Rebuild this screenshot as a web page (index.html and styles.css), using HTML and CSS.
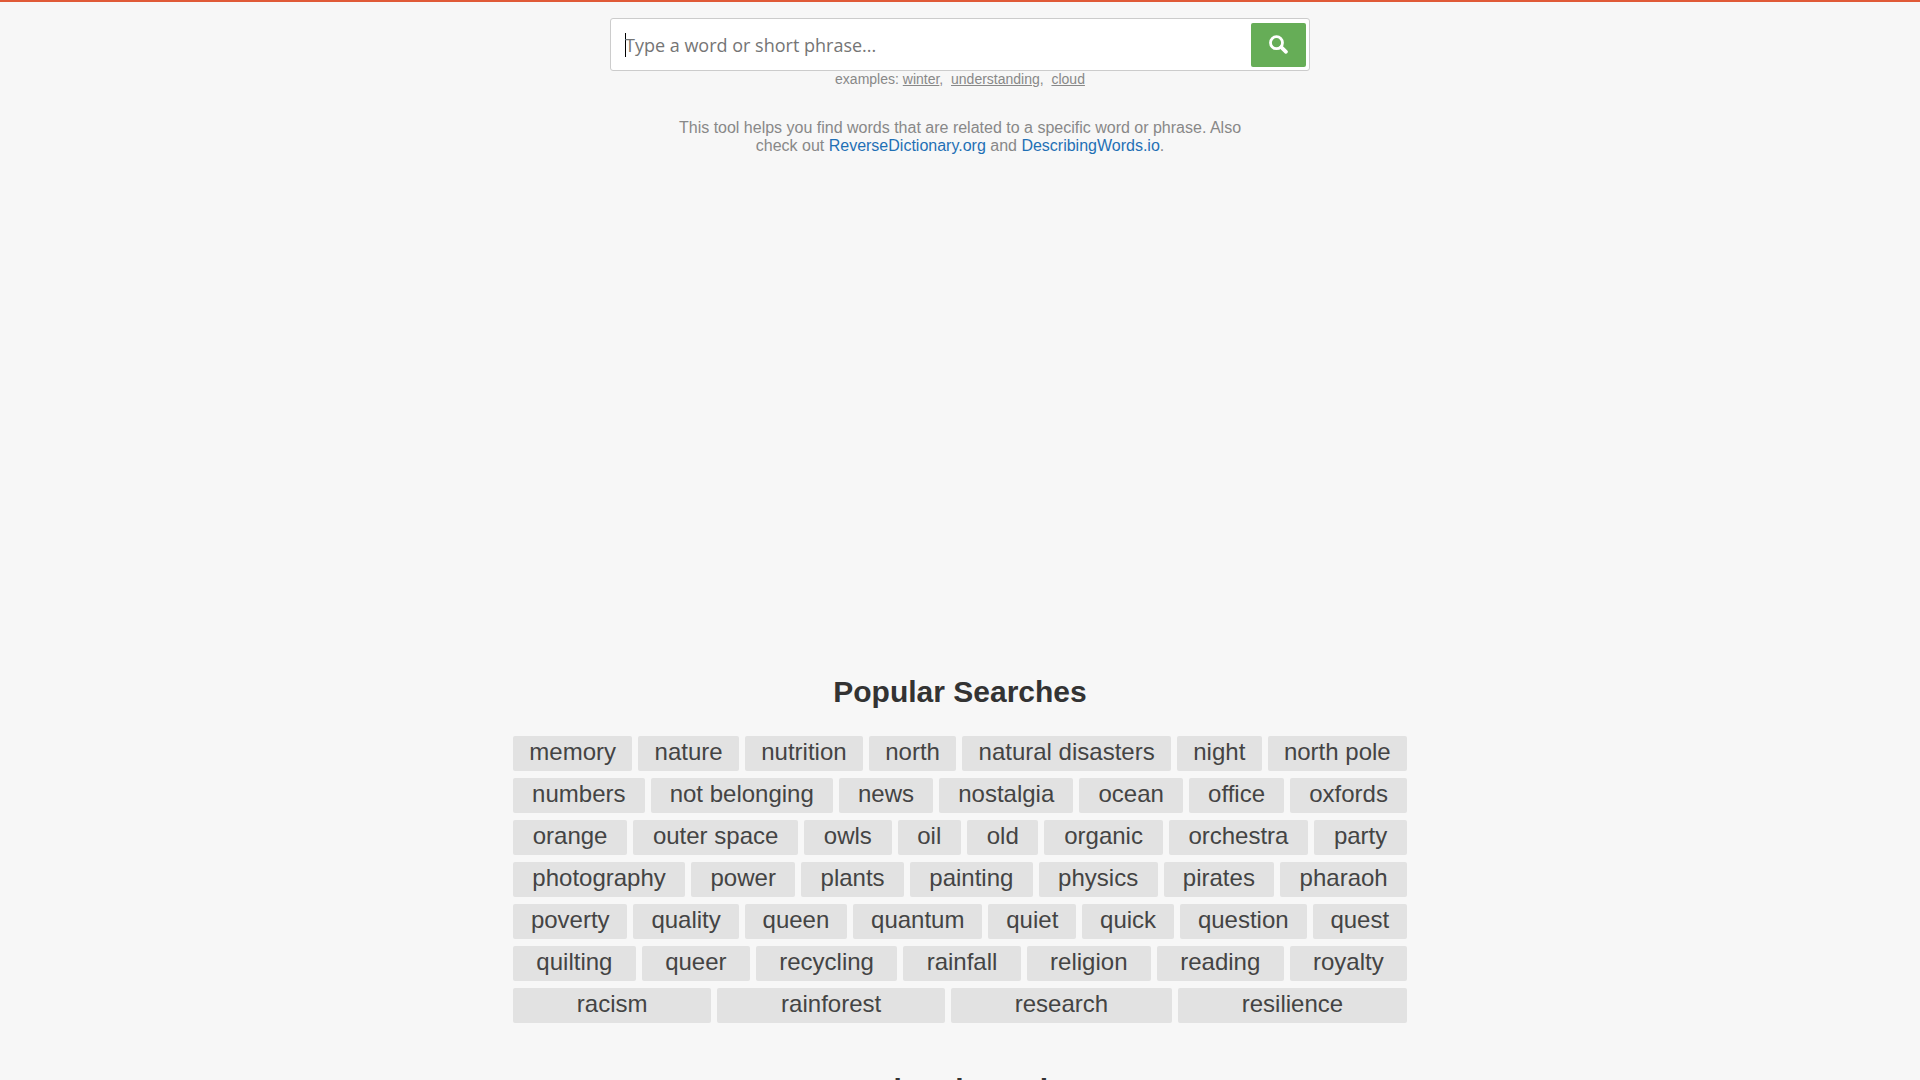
FILE: index.html
```html
<!DOCTYPE html>
<html lang="en">
<head>
    <meta charset="UTF-8">
    <meta name="viewport" content="width=device-width, initial-scale=1.0">
    <title>Related Words</title>
    <link rel="stylesheet" href="styles.css">
</head>
<body>
    <header class="search-area">
        <form class="search-box" onsubmit="return false">
            <input type="text" class="search-input" id="query" aria-label="Search" placeholder="Type a word or short phrase..." autocomplete="off" autofocus>
            <button type="submit" class="search-button" aria-label="Search">
                <svg class="search-icon" viewBox="0 0 20 20">
                    <circle cx="7.5" cy="7.7" r="6" fill="none" stroke="#fff" stroke-width="2.8"/>
                    <path d="M12.2 12.2L17 16.8" stroke="#fff" stroke-width="3.8" stroke-linecap="round"/>
                </svg>
            </button>
        </form>
        <div class="examples">examples: <a href="#">winter</a>,&nbsp; <a href="#">understanding</a>,&nbsp; <a href="#">cloud</a></div>
        <p class="description">This tool helps you find words that are related to a specific word or phrase. Also check out <a href="#">ReverseDictionary.org</a> and <a href="#">DescribingWords.io</a>.</p>
    </header>

    <!-- ad slot -->
    <div class="ad-space"></div>

    <main>
        <h2>Popular Searches</h2>
        <div class="popular">
            <a href="#">memory</a>
            <a href="#">nature</a>
            <a href="#">nutrition</a>
            <a href="#">north</a>
            <a href="#">natural disasters</a>
            <a href="#">night</a>
            <a href="#">north pole</a>
            <a href="#">numbers</a>
            <a href="#">not belonging</a>
            <a href="#">news</a>
            <a href="#">nostalgia</a>
            <a href="#">ocean</a>
            <a href="#">office</a>
            <a href="#">oxfords</a>
            <a href="#">orange</a>
            <a href="#">outer space</a>
            <a href="#">owls</a>
            <a href="#">oil</a>
            <a href="#">old</a>
            <a href="#">organic</a>
            <a href="#">orchestra</a>
            <a href="#">party</a>
            <a href="#">photography</a>
            <a href="#">power</a>
            <a href="#">plants</a>
            <a href="#">painting</a>
            <a href="#">physics</a>
            <a href="#">pirates</a>
            <a href="#">pharaoh</a>
            <a href="#">poverty</a>
            <a href="#">quality</a>
            <a href="#">queen</a>
            <a href="#">quantum</a>
            <a href="#">quiet</a>
            <a href="#">quick</a>
            <a href="#">question</a>
            <a href="#">quest</a>
            <a href="#">quilting</a>
            <a href="#">queer</a>
            <a href="#">recycling</a>
            <a href="#">rainfall</a>
            <a href="#">religion</a>
            <a href="#">reading</a>
            <a href="#">royalty</a>
            <a href="#">racism</a>
            <a href="#">rainforest</a>
            <a href="#">research</a>
            <a href="#">resilience</a>
        </div>
        <h2>Related Words</h2>
    </main>
</body>
</html>
```
FILE: styles.css
```css
* {
    box-sizing: border-box;
}
body {
    margin: 0;
    border-top: 2px solid #e05a38;
    background: #f7f7f7;
    color: #333;
    font-family: "Liberation Sans", Arial, sans-serif;
    font-size: 16px;
    line-height: 18px;
    text-align: center;
}
.search-area {
    max-width: 700px;
    margin: 0 auto;
    padding-top: 16px;
    color: #888;
}
.search-box {
    display: flex;
    padding: 4px 3px 3px;
    background: #fff;
    border: 1px solid #ccc;
    border-radius: 3px;
}
.search-input {
    flex: 1;
    min-width: 0;
    padding: 0 11px;
    border: none;
    outline: none;
    background: transparent;
    color: #333;
    caret-color: #000;
    font-family: "Open Sans", sans-serif;
    font-size: 18px;
}
.search-input::placeholder {
    color: #757575;
}
/* steady text cursor while the box is empty */
.search-input:placeholder-shown {
    background: linear-gradient(#000, #000) 11px center / 1px 24px no-repeat;
}
.search-button {
    display: flex;
    align-items: center;
    justify-content: center;
    width: 55px;
    height: 44px;
    padding: 0;
    background: #66ad57;
    border: none;
    border-radius: 2px;
    cursor: pointer;
}
.search-icon {
    width: 20px;
    height: 20px;
}
.examples {
    font-size: 14px;
    line-height: 16px;
}
.examples a {
    color: inherit;
}
.description {
    max-width: 600px;
    margin: 32px auto 0;
}
.description a {
    color: #1f70b5;
    text-decoration: none;
}
.ad-space {
    height: 497px;
}
main {
    max-width: 894px;
    margin: 0 auto;
}
h2 {
    margin: 20px 0 24px;
    font-size: 30px;
    line-height: 40px;
}
.popular {
    display: flex;
    flex-wrap: wrap;
    gap: 7px 6px;
    margin-bottom: 47px;
}
.popular a {
    flex: 1 0 auto;
    padding: 0 16px 3px;
    background: #e2e2e2;
    border-radius: 2px;
    color: #444;
    font-size: 24px;
    line-height: 32px;
    text-decoration: none;
}
```
